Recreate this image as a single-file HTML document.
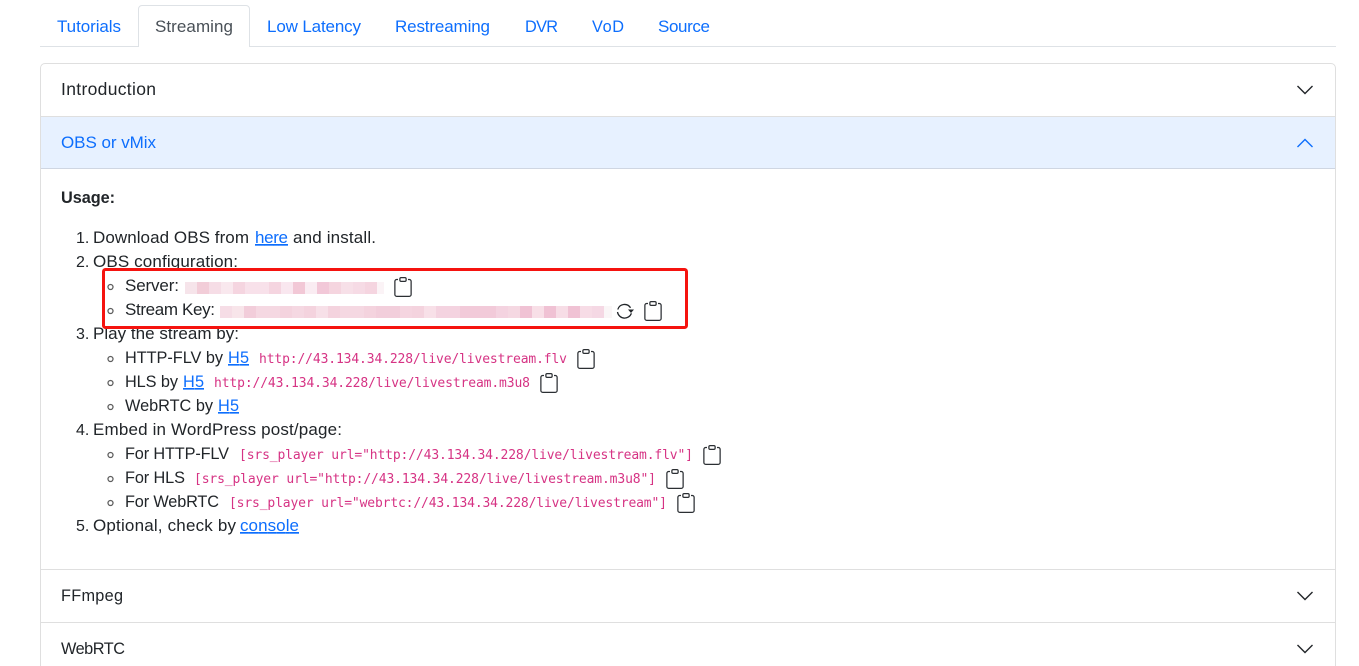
<!DOCTYPE html>
<html lang="en">
<head>
<meta charset="utf-8">
<title>Streaming</title>
<style>
html,body{margin:0;padding:0;background:#fff;width:1359px;height:666px;overflow:hidden}
svg{display:block}
text{font-family:"Liberation Sans","Noto Sans CJK SC",sans-serif;font-size:17px;fill:#212529}
text.s{font-size:16.3px}
text.n{font-size:16px}
.l{fill:#0d6efd}
.u{fill:#0d6efd;text-decoration:underline}
text.m{font-family:"DejaVu Sans Mono","Liberation Mono",monospace;font-size:13px;fill:#d63384}
.b{fill:none;stroke:#5f5f5f;stroke-width:1.3}
</style>
</head>
<body>
<svg width="1359" height="666" viewBox="0 0 1359 666" xmlns="http://www.w3.org/2000/svg">
<defs>
<g id="clip" fill="#2b2f33">
<path d="M4 1.500H3a2 2 0 0 0-2 2V14a2 2 0 0 0 2 2h10a2 2 0 0 0 2-2V3.500a2 2 0 0 0-2-2h-1v1h1a1 1 0 0 1 1 1V14a1 1 0 0 1-1 1H3a1 1 0 0 1-1-1V3.500a1 1 0 0 1 1-1h1v-1z" transform="scale(1.25)"/>
<path d="M9.500 1a.5.5 0 0 1 .5.5v1a.5.5 0 0 1-.5.5h-3a.5.5 0 0 1-.5-.5v-1a.5.5 0 0 1 .5-.5h3zm-3-1A1.500 1.500 0 0 0 5 1.500v1A1.500 1.500 0 0 0 6.500 4h3A1.500 1.500 0 0 0 11 2.500v-1A1.500 1.500 0 0 0 9.500 0h-3z" transform="scale(1.25)"/>
</g>
</defs>

<!-- tabs -->
<path d="M40 46.500H1336" stroke="#dee2e6" fill="none"/>
<path d="M138.500 47V9a3.500 3.500 0 0 1 3.500-3.500h104a3.500 3.500 0 0 1 3.500 3.500V47" fill="#fff" stroke="#dee2e6"/>
<rect x="139" y="45" width="110" height="3" fill="#fff"/>
<text class="l" x="57" y="32" textLength="64">Tutorials</text>
<text x="155" y="32" textLength="78" style="fill:#495057">Streaming</text>
<text class="l" x="267" y="32" textLength="94">Low Latency</text>
<text class="l" x="395" y="32" textLength="95">Restreaming</text>
<text class="l s" x="525" y="32" textLength="33">DVR</text>
<text class="l s" x="592" y="32" textLength="32">VoD</text>
<text class="l" x="658" y="32" textLength="52">Source</text>

<!-- accordion -->
<path d="M40.500 670V68a4.500 4.500 0 0 1 4.500-4.500H1331a4.500 4.500 0 0 1 4.500 4.500V670" fill="#fff" stroke="#dfdfdf"/>
<rect x="41" y="117" width="1294" height="51" fill="#e7f1ff"/>
<path d="M41 116.500H1335" stroke="#dfdfdf"/>
<path d="M41 168.500H1335" stroke="#cfd6e2"/>
<path d="M41 569.500H1335M41 622.500H1335" stroke="#dfdfdf"/>

<text x="61" y="95" textLength="95" style="font-size:17.500px">Introduction</text>
<text class="l" x="61" y="148" textLength="95">OBS or vMix</text>
<text class="s" x="61" y="601" textLength="62">FFmpeg</text>
<text class="s" x="61" y="654" textLength="64">WebRTC</text>

<path d="M1297.500 86l7.500 7.500 7.500-7.500" fill="none" stroke="#212529" stroke-width="1.400"/>
<path d="M1297.500 147l7.500-7.500 7.500 7.500" fill="none" stroke="#0d6efd" stroke-width="1.400"/>
<path d="M1297.500 592l7.500 7.500 7.500-7.500" fill="none" stroke="#212529" stroke-width="1.400"/>
<path d="M1297.500 645l7.500 7.500 7.500-7.500" fill="none" stroke="#212529" stroke-width="1.400"/>

<!-- body -->
<text class="s" x="61" y="203" textLength="54" style="font-weight:700">Usage:</text>

<text class="n" x="76" y="243">1.</text>
<text x="93" y="243" textLength="156">Download OBS from</text>
<text class="u" x="255" y="243" textLength="33">here</text>
<text x="293" y="243" textLength="83">and install.</text>

<text class="n" x="76" y="267">2.</text>
<text x="93" y="267" textLength="145">OBS configuration:</text>

<circle class="b" cx="110.500" cy="287" r="2.500"/>
<text x="125" y="291" textLength="54">Server:</text>
<circle class="b" cx="110.500" cy="311" r="2.500"/>
<text x="125" y="315" textLength="90">Stream Key:</text>

<text class="n" x="76" y="339">3.</text>
<text x="93" y="339" textLength="146">Play the stream by:</text>

<circle class="b" cx="110.500" cy="359" r="2.500"/>
<text class="s" x="125" y="363" textLength="98">HTTP-FLV by</text>
<text class="u s" x="228" y="363" textLength="21">H5</text>
<text class="m" x="259" y="363" textLength="308">http://43.134.34.228/live/livestream.flv</text>

<circle class="b" cx="110.500" cy="383" r="2.500"/>
<text class="s" x="125" y="387" textLength="53">HLS by</text>
<text class="u s" x="183" y="387" textLength="21">H5</text>
<text class="m" x="214" y="387" textLength="316">http://43.134.34.228/live/livestream.m3u8</text>

<circle class="b" cx="110.500" cy="407" r="2.500"/>
<text class="s" x="125" y="411" textLength="88">WebRTC by</text>
<text class="u s" x="218" y="411" textLength="21">H5</text>

<text class="n" x="76" y="435">4.</text>
<text x="93" y="435" textLength="249">Embed in WordPress post/page:</text>

<circle class="b" cx="110.500" cy="455" r="2.500"/>
<text class="s" x="125" y="459" textLength="104">For HTTP-FLV</text>
<text class="m" x="239" y="459" textLength="454">[srs_player url="http://43.134.34.228/live/livestream.flv"]</text>

<circle class="b" cx="110.500" cy="479" r="2.500"/>
<text class="s" x="125" y="483" textLength="60">For HLS</text>
<text class="m" x="194" y="483" textLength="462">[srs_player url="http://43.134.34.228/live/livestream.m3u8"]</text>

<circle class="b" cx="110.500" cy="503" r="2.500"/>
<text class="s" x="125" y="507" textLength="94">For WebRTC</text>
<text class="m" x="229" y="507" textLength="438">[srs_player url="webrtc://43.134.34.228/live/livestream"]</text>

<text class="n" x="76" y="531">5.</text>
<text x="93" y="531" textLength="143">Optional, check by</text>
<text class="u" x="240" y="531" textLength="59">console</text>

<!-- clipboards -->
<use href="#clip" x="393" y="277"/>
<use href="#clip" x="643" y="301"/>
<use href="#clip" x="576" y="349"/>
<use href="#clip" x="539" y="373"/>
<use href="#clip" x="702" y="445"/>
<use href="#clip" x="665" y="469"/>
<use href="#clip" x="676" y="493"/>

<!-- refresh -->
<path d="M617.800 309.500A7 7 0 0 1 630.500 307.800M631.400 313.300A7.200 7.200 0 0 1 617.500 312" fill="none" stroke="#212529" stroke-width="1.300"/>
<path d="M628 309.500h6l-3 3.500z" fill="#212529"/>

<!-- mosaic server -->
<g shape-rendering="crispEdges">
<rect x="185" y="282" width="12" height="12" fill="#f6e4ea"/>
<rect x="197" y="282" width="12" height="12" fill="#f2cdd8"/>
<rect x="209" y="282" width="12" height="12" fill="#f6dde6"/>
<rect x="221" y="282" width="12" height="12" fill="#f9e8ee"/>
<rect x="233" y="282" width="12" height="12" fill="#f5d5e0"/>
<rect x="245" y="282" width="12" height="12" fill="#f8e1ea"/>
<rect x="257" y="282" width="12" height="12" fill="#f8e1ea"/>
<rect x="269" y="282" width="12" height="12" fill="#f5d5e0"/>
<rect x="281" y="282" width="12" height="12" fill="#f9e7ef"/>
<rect x="293" y="282" width="12" height="12" fill="#f2c8d6"/>
<rect x="305" y="282" width="12" height="12" fill="#faecf2"/>
<rect x="317" y="282" width="12" height="12" fill="#f2c8d8"/>
<rect x="329" y="282" width="12" height="12" fill="#f5d5df"/>
<rect x="341" y="282" width="12" height="12" fill="#f7e0e8"/>
<rect x="353" y="282" width="12" height="12" fill="#f6dbe5"/>
<rect x="365" y="282" width="12" height="12" fill="#f5d5e0"/>
<rect x="377" y="282" width="7" height="12" fill="#fbf3f6"/>
</g>
<!-- mosaic key -->
<g shape-rendering="crispEdges">
<rect x="220" y="306" width="12" height="12" fill="#f6dde6"/>
<rect x="232" y="306" width="12" height="12" fill="#f8e5ea"/>
<rect x="244" y="306" width="12" height="12" fill="#f2cdda"/>
<rect x="256" y="306" width="12" height="12" fill="#f5d8e2"/>
<rect x="268" y="306" width="12" height="12" fill="#f5d8e2"/>
<rect x="280" y="306" width="12" height="12" fill="#f4d3de"/>
<rect x="292" y="306" width="12" height="12" fill="#f5d8e2"/>
<rect x="304" y="306" width="12" height="12" fill="#f4d3de"/>
<rect x="316" y="306" width="12" height="12" fill="#f7e0e8"/>
<rect x="328" y="306" width="12" height="12" fill="#f4d3de"/>
<rect x="340" y="306" width="12" height="12" fill="#f5d8e2"/>
<rect x="352" y="306" width="12" height="12" fill="#f5d8e2"/>
<rect x="364" y="306" width="12" height="12" fill="#f4d3de"/>
<rect x="376" y="306" width="12" height="12" fill="#f2cedb"/>
<rect x="388" y="306" width="12" height="12" fill="#f2cedb"/>
<rect x="400" y="306" width="12" height="12" fill="#f5d5e0"/>
<rect x="412" y="306" width="12" height="12" fill="#f4d3de"/>
<rect x="424" y="306" width="12" height="12" fill="#f8e0e8"/>
<rect x="436" y="306" width="12" height="12" fill="#f4d3e0"/>
<rect x="448" y="306" width="12" height="12" fill="#f4d3e0"/>
<rect x="460" y="306" width="12" height="12" fill="#f2cad9"/>
<rect x="472" y="306" width="12" height="12" fill="#f2cad9"/>
<rect x="484" y="306" width="12" height="12" fill="#f2cad9"/>
<rect x="496" y="306" width="12" height="12" fill="#f4d3e0"/>
<rect x="508" y="306" width="12" height="12" fill="#f5d8e2"/>
<rect x="520" y="306" width="12" height="12" fill="#f0c2d4"/>
<rect x="532" y="306" width="12" height="12" fill="#f8dfe7"/>
<rect x="544" y="306" width="12" height="12" fill="#f0c2d4"/>
<rect x="556" y="306" width="12" height="12" fill="#f7dde6"/>
<rect x="568" y="306" width="12" height="12" fill="#f0c2d4"/>
<rect x="580" y="306" width="12" height="12" fill="#f7dce6"/>
<rect x="592" y="306" width="12" height="12" fill="#f5d8e4"/>
<rect x="604" y="306" width="8" height="12" fill="#faf6f7"/>
</g>

<!-- red annotation -->
<rect x="103.500" y="269.500" width="583" height="58" rx="2" fill="none" stroke="#f5130f" stroke-width="3"/>
</svg>
</body>
</html>
